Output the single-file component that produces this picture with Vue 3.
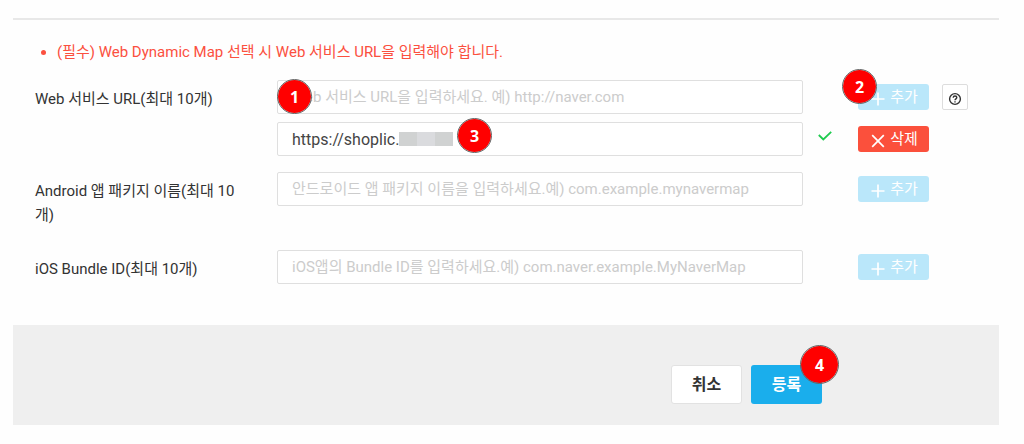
<script setup>
import { ref } from 'vue'

const webUrl = ref('')
const savedUrl = ref('https://shoplic.')
const androidPackage = ref('')
const iosBundle = ref('')
</script>

<template>
  <form class="page" @submit.prevent>
    <section class="settings">
      <ul class="notice">
        <li>(필수) Web Dynamic Map 선택 시 Web 서비스 URL을 입력해야 합니다.</li>
      </ul>

      <div class="group">
        <label class="label" for="web-url">Web 서비스 URL(최대 10개)</label>
        <div class="entries">
          <div class="entry">
            <div class="field">
              <input id="web-url" v-model="webUrl" class="input" type="text" placeholder="Web 서비스 URL을 입력하세요. 예) http://naver.com">
              <span class="badge badge-url">1</span>
            </div>
            <div class="actions">
              <div class="anchor">
                <button class="small add" type="button" disabled>
                  <svg class="icon" viewBox="0 0 14 14"><path d="M7 0.5v13M0.5 7h13" /></svg>추가
                </button>
                <span class="badge badge-add">2</span>
              </div>
              <button class="help" type="button" aria-label="도움말">
                <svg viewBox="0 0 14 14"><circle cx="7" cy="7" r="5.4" /><path d="M5.2 5.7C5.2 4.6 6 4 7 4s1.8.6 1.8 1.6c0 1.2-1.8 1.3-1.8 2.6M7 9.2v1.3" /></svg>
              </button>
            </div>
          </div>
          <div class="entry">
            <div class="field">
              <input v-model="savedUrl" class="input saved" type="text" aria-label="등록된 Web 서비스 URL">
              <span class="mask"><i></i><i></i><i></i></span>
              <span class="badge badge-saved">3</span>
            </div>
            <svg class="check" viewBox="0 0 14 10"><path d="M0.8 4l4.5 4.4L13.2 0.8" /></svg>
            <div class="actions">
              <button class="small remove" type="button">
                <svg class="icon" viewBox="0 0 14 14"><path d="M1.2 1.2l11.6 11.6M12.8 1.2L1.2 12.8" /></svg>삭제
              </button>
            </div>
          </div>
        </div>
      </div>

      <div class="group">
        <label class="label" for="android">Android 앱 패키지 이름(최대 10개)</label>
        <div class="entries">
          <div class="entry">
            <div class="field">
              <input id="android" v-model="androidPackage" class="input" type="text" placeholder="안드로이드 앱 패키지 이름을 입력하세요.예) com.example.mynavermap">
            </div>
            <div class="actions">
              <button class="small add" type="button" disabled>
                <svg class="icon" viewBox="0 0 14 14"><path d="M7 0.5v13M0.5 7h13" /></svg>추가
              </button>
            </div>
          </div>
        </div>
      </div>

      <div class="group">
        <label class="label" for="ios">iOS Bundle ID(최대 10개)</label>
        <div class="entries">
          <div class="entry">
            <div class="field">
              <input id="ios" v-model="iosBundle" class="input" type="text" placeholder="iOS앱의 Bundle ID를 입력하세요.예) com.naver.example.MyNaverMap">
            </div>
            <div class="actions">
              <button class="small add" type="button" disabled>
                <svg class="icon" viewBox="0 0 14 14"><path d="M7 0.5v13M0.5 7h13" /></svg>추가
              </button>
            </div>
          </div>
        </div>
      </div>
    </section>

    <footer class="footer">
      <button class="large cancel" type="button">취소</button>
      <div class="anchor">
        <button class="large submit" type="submit">등록</button>
        <span class="badge badge-submit">4</span>
      </div>
    </footer>
  </form>
</template>

<style>
body {
  background: #fefefe;
}
</style>

<style scoped>
.page {
  padding: 18px 25px 18px 13px;
  color: #333;
  font: 15px/24px Roboto, "Noto Sans CJK KR", sans-serif;
}
.page * {
  box-sizing: border-box;
}
.settings {
  padding: 20px 31px 21px 22px;
  border-top: 2px solid #e8e8e8;
}
.notice {
  margin: 0 0 16px;
  padding-left: 22px;
  color: #fb503f;
}
.group {
  display: grid;
  grid-template-columns: 242px minmax(0, 1fr);
  margin-bottom: 16px;
}
.label {
  padding: 7px 32px 7px 0;
  word-break: break-all;
}
.entries {
  display: grid;
  align-content: start;
  gap: 8px;
}
.entry {
  display: grid;
  grid-template-columns: minmax(0, 1fr) 55px 110px;
  align-items: center;
}
.field,
.anchor {
  position: relative;
}
.input {
  display: block;
  width: 100%;
  height: 34px;
  padding: 0 14px;
  border: 1px solid #dfdfdf;
  border-radius: 2px;
  background: #fff;
  color: #444;
  font: inherit;
  outline: none;
}
.input::placeholder {
  color: #ccc;
  opacity: 1;
}
.saved {
  font-size: 16px;
}
.actions {
  display: flex;
  grid-column: 3;
  gap: 13px;
}
button {
  padding: 0;
  border: 0;
  font: inherit;
}
.small {
  display: flex;
  align-items: center;
  justify-content: center;
  gap: 5px;
  width: 71px;
  height: 26px;
  padding-left: 2px;
  border-radius: 3px;
  color: #fff;
}
.add {
  background: #bae7fa;
}
.remove {
  background: #fb503c;
}
.icon {
  width: 14px;
  height: 14px;
  margin-top: 3px;
  fill: none;
  stroke: #fff;
  stroke-width: 1.7;
}
.help {
  display: flex;
  align-items: center;
  justify-content: center;
  width: 26px;
  height: 26px;
  border: 1px solid #ddd;
  border-radius: 2px;
  background: #fff;
}
.help svg {
  width: 14px;
  height: 14px;
  margin-top: 3px;
  fill: none;
  stroke: #333;
  stroke-width: 1.4;
}
.check {
  width: 14px;
  height: 10px;
  margin: 0 0 6px 15px;
  fill: none;
  stroke: #1fcb4f;
  stroke-width: 1.8;
}
.mask {
  position: absolute;
  top: 10px;
  left: 122px;
  display: flex;
  width: 54px;
  height: 14px;
  background: #d0d2d2;
}
.mask i {
  flex: 1;
}
.mask i:nth-child(2) {
  background: #dadbde;
}
.badge {
  position: absolute;
  display: flex;
  align-items: center;
  justify-content: center;
  width: 35px;
  height: 35px;
  border: 1px solid #666;
  border-radius: 50%;
  background: #f00;
  background-clip: padding-box;
  color: #fff;
  font: bold 16px/24px "Noto Sans", sans-serif;
}
.badge-url {
  top: -1px;
  left: 0;
}
.badge-add {
  top: -15px;
  left: -16px;
}
.badge-saved {
  top: -4px;
  left: 180px;
}
.badge-submit {
  top: -20px;
  right: -17px;
  width: 39px;
  height: 39px;
}
.footer {
  display: flex;
  justify-content: flex-end;
  gap: 9px;
  padding: 40px 177px 21px;
  background: #efefef;
}
.large {
  width: 71px;
  height: 39px;
  border-radius: 3px;
  font-size: 16px;
  font-weight: 700;
}
.cancel {
  border: 1px solid #e2e2e2;
  background: #fff;
  color: #333;
}
.submit {
  background: #1aaeec;
  color: #fff;
}
</style>
